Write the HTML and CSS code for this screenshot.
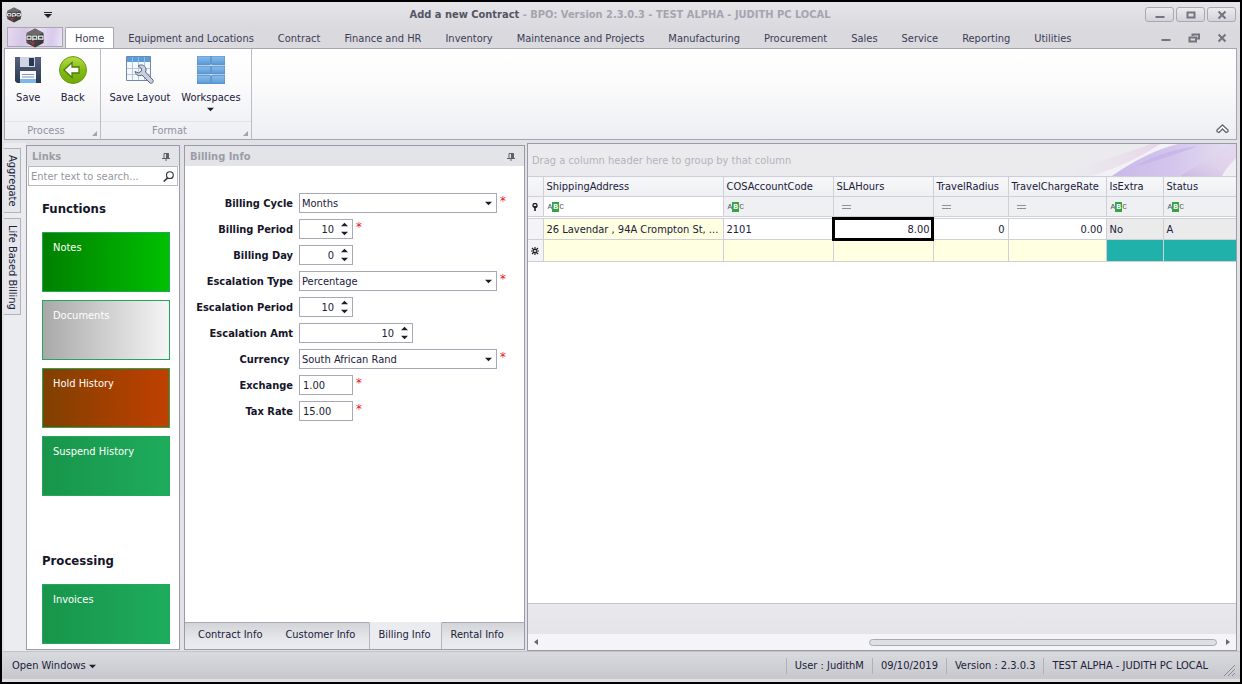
FILE: index.html
```html
<!DOCTYPE html>
<html lang="en">
<head>
<meta charset="utf-8">
<title>Add a new Contract - BPO</title>
<link rel="stylesheet" href="styles.css">
</head>
<body>
<svg class="defs" aria-hidden="true">
  <defs>
    <linearGradient id="hex-fill" x1="0" y1="0" x2="1" y2="1"><stop offset="0" stop-color="#777"/><stop offset=".5" stop-color="#444"/><stop offset="1" stop-color="#333"/></linearGradient>
    <linearGradient id="disk-fill" x1="0" y1="0" x2="0" y2="1"><stop offset="0" stop-color="#56637f"/><stop offset="1" stop-color="#2c3850"/></linearGradient>
    <linearGradient id="back-fill" x1="0" y1="0" x2="0" y2="1"><stop offset="0" stop-color="#b6dc4a"/><stop offset=".5" stop-color="#86bd12"/><stop offset="1" stop-color="#6fa80a"/></linearGradient>
    <linearGradient id="blue-fill" x1="0" y1="0" x2="0" y2="1"><stop offset="0" stop-color="#8abdea"/><stop offset="1" stop-color="#5a9ad6"/></linearGradient>
    <linearGradient id="wave-a" x1="0" y1="0" x2="1" y2="0"><stop offset="0" stop-color="#c9b8ea"/><stop offset=".5" stop-color="#d3c6ec"/><stop offset="1" stop-color="#e6e0ef"/></linearGradient>
    <linearGradient id="wave-b" x1="0" y1="0" x2="1" y2="0"><stop offset="0" stop-color="#ebe6ee" stop-opacity="0"/><stop offset="1" stop-color="#e6d0e9"/></linearGradient>
    <linearGradient id="wave-c" x1="0" y1="1" x2="1" y2="0"><stop offset="0" stop-color="#cdb8e4"/><stop offset=".5" stop-color="#dfd3ec"/><stop offset="1" stop-color="#e3d9ee"/></linearGradient>
    <symbol id="logo" viewBox="0 0 20 20">
      <path d="M10 0.5 18.5 5v10L10 19.5 1.5 15V5z" fill="url(#hex-fill)"/>
      <path d="M10 .5 18.5 5 10 8 1.5 5z" fill="#6b6b6b"/>
      <path d="M1 7h18v5.500H1z" fill="#333"/>
      <path d="M2 8.200h4v3H2zM7.800 12.500V8.200h4v3H8M13.600 8.200H18v3h-4.400z" fill="none" stroke="#f2f2f2" stroke-width="1.200"/>
      <path d="M5.500 13.500l3.500 3.500M9 14l-2 2" stroke="#c22f38" stroke-width="1.300"/>
    </symbol>
    <symbol id="down" viewBox="0 0 8 8"><path d="M0 2h8L4 6z" fill="#1d1d2b"/></symbol>
    <symbol id="up" viewBox="0 0 8 8"><path d="M0 6h8L4 2z" fill="#1d1d2b"/></symbol>
    <symbol id="pin" viewBox="0 0 8 8"><path d="M2 5V.500h4.500V5M0 5.500h8M4 6v2" fill="none" stroke="#5f5f6c"/><path d="M4 0h2.500v5H4z" fill="#5f5f6c"/></symbol>
    <symbol id="launcher" viewBox="0 0 6 6"><path d="M6 0v6H0z" fill="#a3a3ab"/></symbol>
  </defs>
</svg>
<div class="window">
  <header class="titlebar">
    <svg class="app-icon"><use href="#logo"/></svg>
    <button class="quick" aria-label="Customize quick access"><svg viewBox="0 0 8 6"><path d="M0 0h8v1H0zM0 2h8L4 6z" fill="#1d1d2b"/></svg></button>
    <h1 class="title"><strong>Add a new Contract</strong> - BPO: Version 2.3.0.3 - TEST ALPHA - JUDITH PC LOCAL</h1>
    <div class="win-buttons">
      <button aria-label="Minimize"><svg viewBox="0 0 12 10"><path d="M1.500 7h9" stroke="#74747f" stroke-width="2"/></svg></button>
      <button aria-label="Maximize"><svg viewBox="0 0 12 10"><path d="M2.500 2.500h7v5h-7z" fill="none" stroke="#74747f" stroke-width="2"/></svg></button>
      <button aria-label="Close"><svg viewBox="0 0 12 10"><path d="M2.500 1.500l7 7m0-7l-7 7" stroke="#74747f" stroke-width="2"/></svg></button>
    </div>
  </header>

  <nav class="tabs">
    <button class="app-button" aria-label="Application menu"><svg><use href="#logo"/></svg></button>
    <button class="tab active">Home</button>
    <button class="tab">Equipment and Locations</button>
    <button class="tab">Contract</button>
    <button class="tab">Finance and HR</button>
    <button class="tab">Inventory</button>
    <button class="tab">Maintenance and Projects</button>
    <button class="tab">Manufacturing</button>
    <button class="tab">Procurement</button>
    <button class="tab">Sales</button>
    <button class="tab">Service</button>
    <button class="tab">Reporting</button>
    <button class="tab">Utilities</button>
    <div class="mdi-buttons">
      <button aria-label="Minimize document"><svg viewBox="0 0 12 10"><path d="M1.500 7h9" stroke="#74747f" stroke-width="2"/></svg></button>
      <button aria-label="Restore document"><svg viewBox="0 0 12 10"><path d="M4.500 3V1.500h6.500v4H9M1.500 4.500h6.500v4h-6.500z" fill="none" stroke="#74747f" stroke-width="2"/></svg></button>
      <button aria-label="Close document"><svg viewBox="0 0 12 10"><path d="M2.500 1.500l7 7m0-7l-7 7" stroke="#74747f" stroke-width="2"/></svg></button>
    </div>
  </nav>

  <section class="ribbon">
    <div class="group">
      <div class="group-items">
        <button class="big">
          <svg viewBox="0 0 28 28"><path d="M1 1h26v26H3l-2-2z" fill="url(#disk-fill)"/><path d="M6 1h15v10H6z" fill="#cfd6e2"/><path d="M15 2h5v8h-5z" fill="#2b3750"/><path d="M6 15h16v12H6z" fill="#f7f9fc"/><path d="M6 23h16v4H6z" fill="#7db6e8"/><path d="M8 18.500h12M8 21h12" stroke="#8b97ab"/></svg>
          <span>Save</span>
        </button>
        <button class="big">
          <svg viewBox="0 0 28 28"><circle cx="14" cy="14" r="13.500" fill="url(#back-fill)" stroke="#6a9c12"/><path d="M5 14l8-7.500v4.500h7v6h-7v4.500z" fill="#fff" stroke="#4c7a08" stroke-width="1.300"/></svg>
          <span>Back</span>
        </button>
      </div>
      <div class="caption">Process<svg><use href="#launcher"/></svg></div>
    </div>
    <div class="group format">
      <div class="group-items">
        <button class="big">
          <svg viewBox="0 0 28 28"><path d="M.500.500h24v24H.500z" fill="#f4f7fb" stroke="#7387ab"/><path d="M1 1h23v5H1z" fill="#5a9cdb"/><path d="M6.500 6v18M12.500 6v18M18.500 6v18M1 12.500h23M1 18.500h23" stroke="#b9c6da"/><path d="M6.500 1v5M12.500 1v5M18.500 1v5" stroke="#8bbcea"/><path d="M12 10c3-2 6-1 7.500 1.500 1 2 .500 3 0 4.500l7.500 8c1 2-1 4-3 3l-8-8c-3 1.500-6 .500-7-3.500l3.500 1.500 3-2v-2.500z" fill="#c9d0dc" stroke="#566480"/></svg>
          <span>Save Layout</span>
        </button>
        <button class="big">
          <svg viewBox="0 0 28 28"><g fill="url(#blue-fill)" stroke="#4a88c4" stroke-width=".8"><path d="M0 0h13.500v8.500H0zM14.500 0H28v8.500H14.500z"/><path d="M0 10h13.500v8H0zM14.500 10H28v8H14.500z"/><path d="M0 19.500h13.500V28H0zM14.500 19.500H28V28H14.500z"/></g></svg>
          <span>Workspaces</span>
          <svg class="arrow"><use href="#down"/></svg>
        </button>
      </div>
      <div class="caption">Format<svg><use href="#launcher"/></svg></div>
    </div>
    <button class="collapse" aria-label="Collapse ribbon"><svg viewBox="0 0 13 10"><path d="M1 6L6.500 1 12 6v1.500L10 8.500 6.500 5 3 8.500 1 7.500z" fill="#fff" stroke="#666673" stroke-width="1.300"/></svg></button>
  </section>

  <main class="content">
    <aside class="side-tabs">
      <button>Aggregate</button>
      <button>Life Based Billing</button>
    </aside>

    <section class="panel links">
      <h2 class="panel-head">Links<svg><use href="#pin"/></svg></h2>
      <div class="search">
        <input type="text" placeholder="Enter text to search..." aria-label="Search links">
        <svg viewBox="0 0 12 12"><circle cx="7.500" cy="4.500" r="3.700" fill="none" stroke="#333340" stroke-width="1.200"/><path d="M5 7.500L.800 11.500" stroke="#333340" stroke-width="1.600"/></svg>
      </div>
      <div class="tiles">
        <h3>Functions</h3>
        <button class="tile notes">Notes</button>
        <button class="tile documents">Documents</button>
        <button class="tile hold">Hold History</button>
        <button class="tile">Suspend History</button>
        <h3 class="second">Processing</h3>
        <button class="tile">Invoices</button>
      </div>
    </section>

    <section class="panel billing">
      <h2 class="panel-head">Billing Info<svg><use href="#pin"/></svg></h2>
      <form class="form">
        <label for="cycle">Billing Cycle</label>
        <div class="field"><span class="combo"><select id="cycle"><option>Months</option></select><svg><use href="#down"/></svg></span><i>*</i></div>
        <label for="period">Billing Period</label>
        <div class="field"><span class="spin"><input id="period" type="text" value="10"><span class="steps"><button type="button" aria-label="Increase"><svg><use href="#up"/></svg></button><button type="button" aria-label="Decrease"><svg><use href="#down"/></svg></button></span></span><i>*</i></div>
        <label for="day">Billing Day</label>
        <div class="field"><span class="spin"><input id="day" type="text" value="0"><span class="steps"><button type="button" aria-label="Increase"><svg><use href="#up"/></svg></button><button type="button" aria-label="Decrease"><svg><use href="#down"/></svg></button></span></span></div>
        <label for="esctype">Escalation Type</label>
        <div class="field"><span class="combo"><select id="esctype"><option>Percentage</option></select><svg><use href="#down"/></svg></span><i>*</i></div>
        <label for="escperiod">Escalation Period</label>
        <div class="field"><span class="spin"><input id="escperiod" type="text" value="10"><span class="steps"><button type="button" aria-label="Increase"><svg><use href="#up"/></svg></button><button type="button" aria-label="Decrease"><svg><use href="#down"/></svg></button></span></span></div>
        <label for="escamt">Escalation Amt</label>
        <div class="field"><span class="spin wide"><input id="escamt" type="text" value="10"><span class="steps"><button type="button" aria-label="Increase"><svg><use href="#up"/></svg></button><button type="button" aria-label="Decrease"><svg><use href="#down"/></svg></button></span></span></div>
        <label for="currency">Currency&nbsp;</label>
        <div class="field"><span class="combo"><select id="currency"><option>South African Rand</option></select><svg><use href="#down"/></svg></span><i>*</i></div>
        <label for="exchange">Exchange</label>
        <div class="field"><input class="plain" id="exchange" type="text" value="1.00"><i>*</i></div>
        <label for="tax">Tax Rate</label>
        <div class="field"><input class="plain" id="tax" type="text" value="15.00"><i>*</i></div>
      </form>
      <div class="bottom-tabs">
        <button>Contract Info</button>
        <button>Customer Info</button>
        <button class="active">Billing Info</button>
        <button>Rental Info</button>
      </div>
    </section>

    <section class="grid-panel">
      <div class="group-panel">
        <svg class="waves" viewBox="0 0 180 32" preserveAspectRatio="none">
          <path d="M0 32C40 18 80 6 94 0h20L50 32z" fill="url(#wave-b)"/>
          <path d="M36 32C66 22 86 12 104 0h22C96 10 76 20 58 32z" fill="#f2f1f5"/>
          <path d="M56 32C76 18 98 6 122 0h58v32z" fill="url(#wave-a)"/>
          <path d="M80 22C100 10 120 5 142 2C120 10 104 16 80 22z" fill="#c2afe8" opacity=".6"/>
          <path d="M124 32C142 22 158 8 174 0h6v14l-14 18z" fill="url(#wave-c)"/>
          <path d="M166 32C170 24 176 18 180 14v18z" fill="#f1eff4"/>
        </svg>
        <span>Drag a column header here to group by that column</span>
      </div>
      <table class="grid">
        <colgroup><col class="c-ind"><col class="c-ship"><col class="c-cos"><col class="c-sla"><col class="c-rad"><col class="c-rate"><col class="c-extra"><col></colgroup>
        <thead>
          <tr><th></th><th>ShippingAddress</th><th>COSAccountCode</th><th>SLAHours</th><th>TravelRadius</th><th>TravelChargeRate</th><th>IsExtra</th><th>Status</th></tr>
          <tr class="filter">
            <td class="ind"><svg viewBox="0 0 8 8"><circle cx="4" cy="2.500" r="2" fill="none" stroke="#1d1d2b" stroke-width="1.300"/><path d="M1.500 3h5L4.800 5v3H3.200V5z" fill="#1d1d2b"/></svg></td>
            <td class="open"><span class="abc">A<b>B</b>C</span></td>
            <td><span class="abc">A<b>B</b>C</span></td>
            <td><span class="eq"></span></td><td><span class="eq"></span></td><td><span class="eq"></span></td>
            <td><span class="abc">A<b>B</b>C</span></td>
            <td><span class="abc">A<b>B</b>C</span></td>
          </tr>
        </thead>
        <tbody>
          <tr><td class="ind"></td><td class="edit">26 Lavendar , 94A Crompton St, ...</td><td>2101</td><td class="num focus">8.00</td><td class="num">0</td><td class="num">0.00</td><td class="locked">No</td><td class="locked">A</td></tr>
          <tr class="new"><td class="ind"><svg viewBox="0 0 8 8"><path d="M4 0v8M0 4h8M1 1l6 6M7 1L1 7" stroke="#1d1d2b" stroke-width="1.200"/><circle cx="4" cy="4" r="1" fill="#fff"/></svg></td><td></td><td></td><td></td><td></td><td></td><td class="teal"></td><td class="teal"></td></tr>
        </tbody>
      </table>
      <div class="grid-space"></div>
      <div class="grid-footer"></div>
      <div class="scrollbar">
        <button aria-label="Scroll left"><svg viewBox="0 0 4 6"><path d="M4 0v6L0 3z" fill="#666673"/></svg></button>
        <div class="track"><div class="thumb"></div></div>
        <button aria-label="Scroll right"><svg viewBox="0 0 4 6"><path d="M0 0v6l4-3z" fill="#666673"/></svg></button>
      </div>
    </section>
  </main>

  <footer class="status">
    <button class="open-windows">Open Windows<svg><use href="#down"/></svg></button>
    <div class="cells">
      <span>User : JudithM</span><span>09/10/2019</span><span>Version : 2.3.0.3</span><span>TEST ALPHA - JUDITH PC LOCAL</span>
    </div>
    <svg class="grip" viewBox="0 0 12 12"><path d="M0 11L11 0M4 11l7-7M8 11l3-3" stroke="#8b8b95"/></svg>
  </footer>
</div>
</body>
</html>
```

FILE: styles.css
```css
* { box-sizing: border-box; }

body {
  margin: 0;
  font: 11px/14px "DejaVu Sans Condensed", "DejaVu Sans", sans-serif;
  font-stretch: condensed;
  color: #20203a;
}

button, input, select { font: inherit; color: inherit; }

button {
  border: 0;
  padding: 0;
  background: none;
}

svg { display: block; }

.defs { position: absolute; width: 0; height: 0; }

.window {
  display: flex;
  flex-direction: column;
  min-height: 100vh;
  border: 2px solid #000;
  background: #dcdce1;
}

/* title bar */
.titlebar {
  display: flex;
  align-items: center;
  height: 25px;
  padding: 0 4px;
  background: linear-gradient(#e5e5ea, #d9d9de);
}

.app-icon { width: 16px; height: 16px; }
.quick { margin-left: 22px; }
.quick svg { width: 8px; height: 6px; }

.title {
  flex: 1;
  margin: 0;
  padding-left: 43px;
  font-size: 11px;
  text-align: center;
  color: #a5a5ae;
  white-space: nowrap;
}

.title strong { color: #555562; }

.win-buttons { display: flex; gap: 2px; }

.win-buttons button {
  display: grid;
  place-items: center;
  width: 29px;
  height: 15px;
  border: 1px solid #a9a9b4;
  border-radius: 3px;
  background: linear-gradient(#ececef, #d3d3d9);
}

.win-buttons svg, .mdi-buttons svg { width: 12px; height: 10px; }

/* ribbon tabs */
.tabs {
  display: flex;
  align-items: flex-end;
  height: 21px;
  padding: 0 5px;
  background: #d9d9de;
}

.app-button {
  display: grid;
  place-items: center;
  width: 56px;
  height: 20px;
  margin-bottom: 1px;
  margin-right: 2px;
  border: 1px solid #a9a4b8;
  background: linear-gradient(100deg, #e6d9ef, #d6c6e8 30%, #eadff2 55%, #d8caec 80%, #ece4f5);
}

.app-button svg { width: 20px; height: 20px; }

.tab {
  height: 21px;
  padding: 3px 12px 0;
  white-space: nowrap;
  color: #3c3c58;
}

.tab.active {
  padding: 2px 9px 0;
  margin-right: 2px;
  border: 1px solid #a6a6b2;
  border-bottom: 0;
  border-radius: 2px 2px 0 0;
  background: #fff;
}

.mdi-buttons {
  display: flex;
  gap: 16px;
  align-self: center;
  margin: 0 7px 0 auto;
}

/* ribbon */
.ribbon {
  display: flex;
  margin: 0 3px 0 2px;
  height: 92px;
  border: 1px solid #a6a6b2;
  background: linear-gradient(#fff, #fbfbfc 40%, #eceef2);
}

.group {
  display: flex;
  flex-direction: column;
  justify-content: space-between;
  width: 96px;
  border-right: 1px solid #bcbcc6;
}

.group.format { width: 151px; }

.group-items {
  display: flex;
  justify-content: space-around;
  padding: 7px 5px 0 1px;
}

.format .group-items { padding: 7px 5px 0 3px; }

.big {
  display: flex;
  flex-direction: column;
  align-items: center;
  white-space: nowrap;
}

.big svg { width: 28px; height: 28px; }
.big span { margin-top: 7px; }
.big .arrow { width: 7px; height: 7px; margin-top: 1px; }

.caption {
  display: flex;
  align-items: center;
  justify-content: center;
  height: 18px;
  padding-right: 13px;
  border-top: 1px solid #e2e2e7;
  color: #92929f;
  position: relative;
}

.caption svg {
  position: absolute;
  right: 3px;
  bottom: 3px;
  width: 5px;
  height: 5px;
}

.collapse { margin: auto 7px 5px auto; }
.collapse svg { width: 13px; height: 10px; }

/* main area */
.content {
  flex: 1;
  display: flex;
  padding: 3px 3px 0 2px;
  background: #e1e1e6;
}

.side-tabs {
  display: flex;
  flex-direction: column;
  gap: 5px;
  width: 22px;
  padding: 5px 5px 0 0;
  background: #ebecef;
}

.side-tabs button {
  writing-mode: vertical-rl;
  padding: 6px 0 5px;
  border: 1px solid #b2b2bd;
  border-left: 0;
  background: #e6e7ea;
  line-height: 15px;
}

.panel {
  display: flex;
  flex-direction: column;
  margin: 2px 4px 1px 0;
  border: 1px solid #9a9aa8;
  background: #fff;
}

.panel-head {
  display: flex;
  align-items: center;
  justify-content: space-between;
  height: 20px;
  margin: 0;
  padding: 1px 9px 0 5px;
  font-size: 11px;
  color: #9c9ca7;
  background: #e3e4e8;
}

.panel-head svg { width: 8px; height: 8px; }

.links { width: 154px; }

.search {
  display: flex;
  align-items: center;
  height: 20px;
  margin: 0 1px;
  padding-right: 3px;
  border: 1px solid #b8b8c2;
}

.search input {
  flex: 1;
  min-width: 0;
  border: 0;
  padding: 1px 2px 0;
}

.search input::placeholder { color: #9696a0; opacity: 1; }
.search svg { width: 11px; height: 11px; }

.tiles {
  display: flex;
  flex-direction: column;
  gap: 8px;
  padding: 14px 9px 5px 15px;
}

.tiles h3 {
  margin: 0 0 7px;
  font-size: 13px;
  line-height: 17px;
  color: #15152a;
}

.tiles .second { margin-top: 48px; }

.tile {
  display: flex;
  align-items: flex-start;
  height: 60px;
  padding: 8px 10px;
  border: 1px solid #21a85c;
  background: linear-gradient(90deg, #18954a, #1eac5c);
  color: #fff;
}

.tile.notes { background: linear-gradient(90deg, #008000, #00c000); }
.tile.documents { background: linear-gradient(90deg, #a9a9a9, #f5f5f5); }
.tile.hold { background: linear-gradient(90deg, #804000, #c04000); }

/* billing form */
.billing { width: 341px; margin-right: 2px; }

.form {
  display: grid;
  grid-template-columns: 108px 1fr;
  grid-auto-rows: 26px;
  column-gap: 6px;
  align-items: center;
  padding-top: 24px;
}

.form label {
  padding-top: 2px;
  text-align: right;
  font-weight: bold;
  color: #15152a;
  white-space: nowrap;
}

.field { display: flex; gap: 3px; }
.field i { font-style: normal; font-size: 13px; line-height: 16px; color: #f01020; }

.combo { display: grid; width: 198px; }

.combo select, .combo svg { grid-area: 1 / 1; }

.combo select {
  appearance: none;
  height: 20px;
  padding: 1px 2px 0;
  border: 1px solid #a9a9b5;
  border-radius: 0;
  background: #fff;
}

.combo svg {
  width: 7px;
  height: 7px;
  place-self: center end;
  margin-right: 5px;
  pointer-events: none;
}

.spin {
  display: flex;
  width: 54px;
  height: 20px;
  border: 1px solid #a9a9b5;
}

.spin.wide { width: 114px; }

.spin input {
  flex: 1;
  min-width: 0;
  border: 0;
  padding: 1px 3px 0 0;
  text-align: right;
}

.steps {
  display: flex;
  flex-direction: column;
  justify-content: space-between;
  padding: 1px 4px;
}

.steps svg { width: 7px; height: 7px; }

.plain {
  width: 54px;
  height: 20px;
  padding: 1px 3px 0;
  border: 1px solid #a9a9b5;
}

.bottom-tabs {
  display: flex;
  margin-top: auto;
  height: 27px;
  background: #ebecef;
}

.bottom-tabs button {
  padding: 0 9px 3px;
  border-top: 1px solid #a9a9b2;
  background: linear-gradient(#d3d4d9, #e6e7ea 60%, #ebecef);
  white-space: nowrap;
}

.bottom-tabs button:first-child { padding: 0 11px 3px 13px; }
.bottom-tabs button:nth-child(2) { padding: 0 14px 3px 12px; }
.bottom-tabs .active { padding: 0 10px 3px 8px; border-top-color: transparent; border-right: 1px solid #b5b5be; border-left: 1px solid #b5b5be; background: #ebecef; }
.bottom-tabs button:last-child { flex: 1; text-align: left; }

/* data grid */
.grid-panel {
  flex: 1;
  min-width: 0;
  display: flex;
  flex-direction: column;
  border: 1px solid #9a9aa8;
  background: #fff;
}

.group-panel {
  position: relative;
  display: flex;
  align-items: center;
  height: 32px;
  padding: 2px 4px 0;
  background: #ebebee;
  color: #b3b3bd;
}

.waves {
  position: absolute;
  top: 0;
  right: 0;
  width: 180px;
  height: 100%;
}

.grid {
  width: 100%;
  table-layout: fixed;
  border-collapse: collapse;
}

.c-ind { width: 15px; }
.c-ship { width: 180px; }
.c-cos { width: 110px; }
.c-sla { width: 100px; }
.c-rad { width: 75px; }
.c-rate { width: 98px; }
.c-extra { width: 57px; }

.grid th, .grid td {
  height: 21px;
  padding: 0 3px;
  border: 1px solid #cfcfd8;
  border-left: 0;
  overflow: hidden;
  white-space: nowrap;
  text-align: left;
}

.grid tbody td { height: 22px; padding-top: 1px; }

.grid th {
  height: 20px;
  font-weight: normal;
  background: linear-gradient(#f8f8fa, #eeeff2);
}

.grid tr > :last-child { border-right: 0; }

.grid .filter td {
  background: #eff0f2;
  padding: 0 4px;
  border-bottom: 3px double #cfcfd8;
}

.grid .filter .open { background: #fff; }

.grid td.ind, .grid .filter td.ind { padding: 0 3px; background: #f4f4f6; }
.ind svg { width: 8px; height: 8px; }

.abc {
  display: flex;
  align-items: center;
  font: 8px/10px "Liberation Mono", monospace;
  color: #55555f;
}

.abc b { padding: 0 1px; background: #35a447; color: #fff; }

.eq {
  display: block;
  width: 9px;
  height: 4px;
  margin-left: 4px;
  border: 1px solid #8f8f9a;
  border-width: 1px 0;
}

.grid .num { text-align: right; }
.grid .edit, .grid .new td { background: #ffffe1; }
.grid .new td.ind { background: #f4f4f6; }
.grid .locked { background: #ebebeb; }
.grid .new td.teal { background: #20b2aa; }
.grid .focus { outline: 3px solid #000; outline-offset: -2px; }

.grid-space { flex: 1; }

.grid-footer {
  height: 31px;
  border-top: 1px solid #c5c5ce;
  background: linear-gradient(#e9e9ed, #e4e4e9);
}

.scrollbar {
  display: flex;
  align-items: center;
  height: 16px;
  padding: 0 6px;
  background: #f5f5f7;
}

.scrollbar svg { width: 4px; height: 6px; }
.track { flex: 1; display: flex; justify-content: flex-end; padding: 0 9px; }

.thumb {
  width: 52%;
  height: 7px;
  border: 1px solid #a9a9b5;
  border-radius: 4px;
  background: #dedee4;
}

/* status bar */
.status {
  display: flex;
  align-items: center;
  height: 31px;
  padding: 0 4px 2px 10px;
  border-top: 1px solid #c2c2ca;
  background: linear-gradient(#d9dade, #c8c9ce 85%, #a9a9b2 86%, #e0e0e5 90%);
}

.open-windows { display: flex; align-items: center; gap: 3px; }
.open-windows svg { width: 7px; height: 7px; }

.cells { display: flex; margin-left: auto; }

.cells span {
  padding: 1px 8px;
  border-left: 1px solid #b0b0ba;
}

.cells span:last-child { padding-right: 16px; }
.grip { width: 12px; height: 12px; align-self: flex-end; margin-bottom: 3px; }
```
